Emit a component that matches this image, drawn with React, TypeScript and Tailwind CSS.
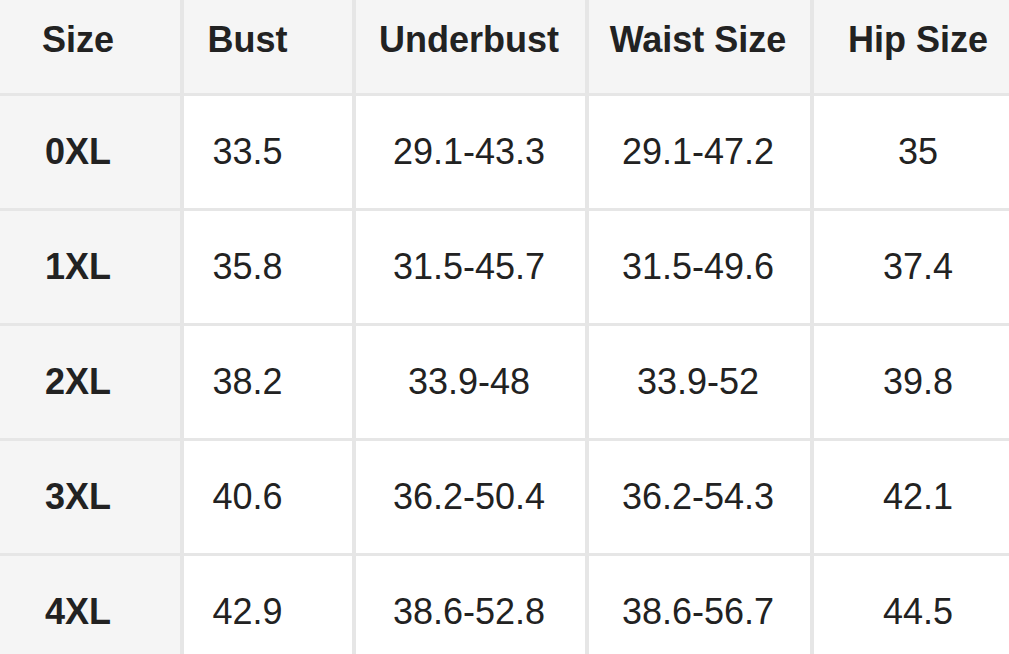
import React from "react";

const headers = ["Size", "Bust", "Underbust", "Waist Size", "Hip Size"];

const rows = [
	["0XL", "33.5", "29.1-43.3", "29.1-47.2", "35"],
	["1XL", "35.8", "31.5-45.7", "31.5-49.6", "37.4"],
	["2XL", "38.2", "33.9-48", "33.9-52", "39.8"],
	["3XL", "40.6", "36.2-50.4", "36.2-54.3", "42.1"],
	["4XL", "42.9", "38.6-52.8", "38.6-56.7", "44.5"],
];

// per-column padding so text sits where the chart puts it
const colPad = ["pr-[24px]", "pr-[41px]", "pr-[3px]", "pr-[3px]", "pr-0"];

const App = () => {
	return (
		<div className="w-full h-[654px] overflow-hidden bg-white font-['Liberation_Sans',Arial,sans-serif] text-[#222222]">
			<div className="grid w-max grid-cols-[180px_168px_229px_221px_208px] gap-x-[4px] gap-y-[3px] bg-[#e6e6e6]">
				{headers.map((h, i) => (
					<div
						key={h}
						className={`h-[93px] flex items-center justify-center pb-[14px] bg-[#f5f5f5] text-[36px] font-bold ${colPad[i]}`}
					>
						{h}
					</div>
				))}
				{rows.map((row) =>
					row.map((cell, i) => (
						<div
							key={row[0] + i}
							className={`h-[112px] flex items-center justify-center text-[36px] ${colPad[i]} ${
								i === 0 ? "bg-[#f5f5f5] font-bold" : "bg-white"
							}`}
						>
							{cell}
						</div>
					))
				)}
			</div>
		</div>
	);
};

export default App;
